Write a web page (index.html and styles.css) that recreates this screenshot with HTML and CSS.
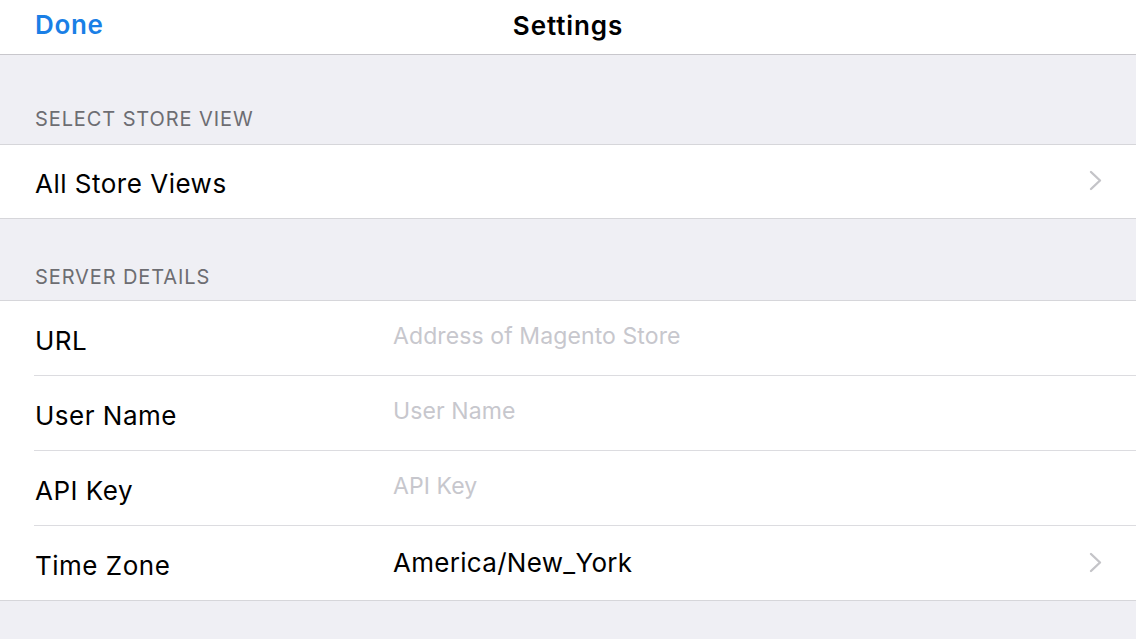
FILE: index.html
```html
<!DOCTYPE html>
<html>
<head>
<meta charset="utf-8">
<link rel="stylesheet" href="styles.css">
</head>
<body>
<header class="navbar">
  <span class="nav-done">Done</span>
  <span class="nav-title">Settings</span>
</header>
<main class="content">
  <div class="section-header first">SELECT STORE VIEW</div>
  <div class="group compact">
    <div class="row">
      <span class="label">All Store Views</span>
      <span class="spacer"></span>
      <svg class="chevron" width="13" height="21" viewBox="0 0 13 21"><path d="M2 2 L11 10.5 L2 19" fill="none" stroke="#c4c4c8" stroke-width="2.4" stroke-linecap="round" stroke-linejoin="round"/></svg>
    </div>
  </div>
  <div class="section-header">SERVER DETAILS</div>
  <div class="group">
    <div class="row">
      <span class="label">URL</span>
      <span class="placeholder">Address of Magento Store</span>
    </div>
    <div class="row">
      <span class="label">User Name</span>
      <span class="placeholder">User Name</span>
    </div>
    <div class="row">
      <span class="label">API Key</span>
      <span class="placeholder">API Key</span>
    </div>
    <div class="row">
      <span class="label">Time Zone</span>
      <span class="value">America/New_York</span>
      <span class="spacer"></span>
      <svg class="chevron" width="13" height="21" viewBox="0 0 13 21"><path d="M2 2 L11 10.5 L2 19" fill="none" stroke="#c4c4c8" stroke-width="2.4" stroke-linecap="round" stroke-linejoin="round"/></svg>
    </div>
  </div>
</main>
</body>
</html>
```
FILE: styles.css
```css
html, body {
  margin: 0;
  padding: 0;
  background: #efeff4;
  font-family: Inter, "Liberation Sans", sans-serif;
  color: #000;
}
.navbar {
  position: relative;
  height: 54px;
  background: #fff;
  border-bottom: 1.5px solid #c8c7cc;
  display: flex;
  align-items: center;
  justify-content: center;
}
.nav-done {
  position: absolute;
  left: 35px;
  top: 9px;
  font-size: 26px;
  font-weight: 600;
  letter-spacing: 0.7px;
  color: #1a7fe6;
}
.nav-title {
  font-size: 26px;
  font-weight: 600;
  margin-top: -4px;
  letter-spacing: 0.9px;
}
.section-header {
  height: 81px;
  box-sizing: border-box;
  padding: 46px 0 0 35px;
  font-size: 20px;
  color: #6d6d72;
  letter-spacing: 0.9px;
}
.section-header.first {
  height: 89px;
  padding-top: 52px;
}
.group {
  background: #fff;
  border-top: 1.5px solid #d6d6da;
  border-bottom: 1.5px solid #d6d6da;
}
.row {
  height: 74px;
  display: flex;
  align-items: center;
  padding-right: 34px;
  margin-left: 34px;
  border-bottom: 1px solid #dcdce0;
}
.row:last-child {
  border-bottom: none;
  height: 74px;
}
.group.compact .row {
  height: 73px;
}
.label {
  width: 358px;
  font-size: 26px;
  letter-spacing: 0.5px;
  padding-left: 1px;
  padding-top: 4px;
}
.placeholder {
  font-size: 23px;
  letter-spacing: 0.1px;
  color: #c7c7cd;
  margin-top: -4px;
}
.value {
  font-size: 26px;
  letter-spacing: 0.3px;
  margin-top: -2px;
}
.spacer {
  flex: 1;
}
.chevron {
  display: block;
  margin-top: -2px;
}
```
